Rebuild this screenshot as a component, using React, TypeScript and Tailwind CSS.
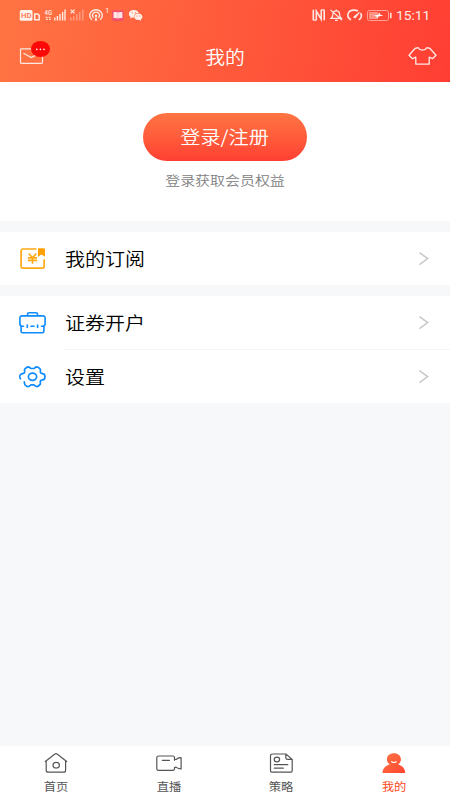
import { useState } from "react";

const FONT = "font-['Noto_Sans_CJK_SC','Noto_Sans',sans-serif]";

function SignalIcons() {
  return (
    <svg width="124" height="18" viewBox="19 6 124 18" fill="none" className="block">
      <rect x="19.800" y="10" width="12.700" height="10.800" rx="1.500" fill="#fff3ee" />
      <text x="21" y="18.200" fontSize="8" fontWeight="500" fontFamily="Roboto" fill="#ff6d42" textLength="10.400" lengthAdjust="spacingAndGlyphs">HD</text>
      <path d="M34.700 13.900h3l1.500 1.500v4.400h-4.500z" stroke="#ffece5" strokeWidth="1.500" />
      <text x="44.600" y="14.800" fontSize="7" fontWeight="500" fontFamily="Roboto" fill="#ffece5" textLength="7.600" lengthAdjust="spacingAndGlyphs">4G</text>
      <path d="M45.500 17.300h2M48.500 17.300h2M46 19.300h2M49 19.300h2" stroke="#ffd9cc" strokeWidth="1.200" />
      <path d="M54.800 20.500v-3M57.400 20.500v-4.500M60 20.500v-6.500M62.600 20.500v-8.500M65 20.500V9.500" stroke="#ffece5" strokeWidth="1.400" />
      <path d="M70.600 9.600l4 3.800M74.600 9.600l-4 3.800" stroke="#ffece5" strokeWidth="1.200" />
      <path d="M70.800 20.500v-3M73.800 20.500v-4M76.800 20.500v-6.500M79.800 20.500v-8.500M82.800 20.500V9.500" stroke="#ff9f83" strokeWidth="1.400" />
      <path d="M92 19.700a6.300 5.600 0 1 1 8 0M93.700 17.600a3.500 3 0 1 1 4.600 0" stroke="#ffece5" strokeWidth="1.400" />
      <circle cx="96" cy="15.800" r="1.200" fill="#ffece5" />
      <path d="M94.700 20.800l1.300-5 1.300 5z" fill="#ffece5" />
      <text x="105" y="12.800" fontSize="8" fontFamily="Roboto" fill="#ffece5">1</text>
      <rect x="112" y="10.300" width="11.800" height="10.700" rx="2" fill="#f4506a" />
      <path d="M113.500 12.300c1.800-.6 3.300-.4 4.400.3 1.200-.7 2.700-.9 4.500-.3v6c-1.800-.4-3.300-.2-4.500.3-1.100-.5-2.600-.7-4.400-.3z" fill="#ffe6e6" />
      <path d="M117.900 12.600v6" stroke="#f7a0aa" strokeWidth=".6" />
      <path d="M133.800 10c-2.800 0-4.900 1.600-4.900 3.900 0 1.300.7 2.400 1.800 3.100l-.4 1.600 2-1c.5.1 1 .2 1.500.2-.4-2.900 1.700-4.900 4.900-4.900-.5-1.700-2.400-2.900-4.900-2.900z" fill="#fff0ea" />
      <path d="M138.300 13.500c-2.300 0-4.100 1.500-4.100 3.300s1.800 3.300 4.100 3.300c.5 0 .9 0 1.300-.2l1.600.8-.4-1.300c1-.6 1.600-1.500 1.600-2.600 0-1.800-1.800-3.300-4.100-3.300z" fill="#fff0ea" />
      <g fill="#ff6a43">
        <circle cx="132.200" cy="12.800" r=".65" />
        <circle cx="135.500" cy="12.800" r=".65" />
        <circle cx="137" cy="16" r=".55" />
        <circle cx="139.800" cy="16" r=".55" />
      </g>
    </svg>
  );
}

function DeviceIcons() {
  return (
    <svg width="82" height="18" viewBox="311 6 82 18" fill="none" className="block">
      <path d="M313.300 9.800v10.400M324.200 9.800v10.400" stroke="#ffe9e4" strokeWidth="1.600" />
      <path d="M316.300 20.200V11l4.900 8.200V9.800" stroke="#ffe9e4" strokeWidth="1.500" />
      <path d="M313.300 20.200h3M321.200 9.800h3" stroke="#ffe9e4" strokeWidth="1.200" />
      <path d="M331.200 18.300h10c-1.200-1-1.600-2-1.600-4 0-2.300-1.400-3.500-3.400-3.500s-3.300 1.200-3.300 3.500c0 2-.3 3-1.700 4zM335 20.300h2.700M336.200 9.400v1.400M330.500 9.900l11.500 10.400" stroke="#ffe9e4" strokeWidth="1.200" />
      <path d="M351 19.900c-5.200-3-3.700-9.800 3-9.800 1.600 0 2.900.3 4 .9M360.400 13c1.700 2.400 1.300 5.200-1.600 6.900" stroke="#ffe9e4" strokeWidth="1.600" />
      <path d="M353.600 17l5.800-4.600-4.200 5.700z" fill="#ffe9e4" stroke="#ffe9e4" strokeWidth="1" />
      <rect x="367.500" y="10.500" width="21" height="10" rx="2" stroke="#ffa396" />
      <rect x="369" y="12" width="9" height="7" rx=".8" fill="#ff9384" />
      <path d="M373 15.700l5.300-1 .8-2.500 1.300 2.500 3 .7-5 1-1 2.300-1.200-2.500z" fill="#fff" />
      <path d="M390.800 12.800v5.400" stroke="#ffe0da" strokeWidth="1.600" />
    </svg>
  );
}

function MailIcon() {
  return (
    <svg width="32" height="26" viewBox="19 39 32 26" fill="none" className="block">
      <rect x="20.500" y="48.800" width="22" height="14.500" rx=".8" stroke="#ffe9e1" strokeWidth="1.200" />
      <path d="M23.500 53.300l7.800 4.300 7.500-4" stroke="#ffe9e1" strokeWidth="1.200" />
      <ellipse cx="40.500" cy="49" rx="9.500" ry="8" fill="#fd0808" />
      <g fill="#fff">
        <circle cx="36.800" cy="49.400" r=".8" />
        <circle cx="40.400" cy="49.400" r=".8" />
        <circle cx="44" cy="49.400" r=".8" />
      </g>
    </svg>
  );
}

function ShirtIcon() {
  return (
    <svg width="30" height="20" viewBox="408 46 30 20" fill="none" stroke="#ffe9e5" strokeWidth="1.300" strokeLinejoin="round" className="block">
      <path d="M418 47.700l-3 .8-6 6.700 3.500 3.500 3.300-1.500v7h13.400v-7l3.300 1.500 3.500-3.500-6-6.700-3-.8c-1 1.700-2.600 2.500-4.500 2.500s-3.500-.8-4.500-2.500z" />
    </svg>
  );
}

function SubscribeIcon() {
  return (
    <svg width="28" height="24" viewBox="19 247 28 24" fill="none" stroke="#ffa914" className="block">
      <path d="M36.500 249H23a1.900 1.900 0 0 0-1.900 1.900V266.300a1.900 1.900 0 0 0 1.900 1.900h19.300a1.900 1.900 0 0 0 1.900-1.900v-7" strokeWidth="1.700" />
      <path d="M38 248.200h5.800c.7 0 1.200.5 1.200 1.200v7.400l-3.600-2.300-3.400 2.300z" fill="#ffa105" stroke="none" />
      <path d="M28.700 253.500l3.800 4.300 3.800-4.300M27.900 257.900h9.200M27.900 260.400h9.200M32.500 257.500v6.300" strokeWidth="1.600" />
    </svg>
  );
}

function BriefcaseIcon() {
  return (
    <svg width="28" height="24" viewBox="19 311 28 24" fill="none" stroke="#0d8bff" strokeWidth="1.600" strokeLinecap="round" className="block">
      <path d="M21.300 326.200l-1.400-1.600v-6.800a1.900 1.900 0 0 1 1.900-1.900h21.400a1.900 1.900 0 0 1 1.900 1.900v6.800l-1.400 1.600" />
      <path d="M27.500 315.500v-1.200c0-1 .6-1.600 1.600-1.600h6.800c1 0 1.600.6 1.600 1.600v1.200" />
      <path d="M21.100 326.200v5c0 1 .6 1.600 1.600 1.600h19.600c1 0 1.600-.6 1.600-1.600v-5M21.300 326.200h2.200M27.300 325v2.400M31 326.200h3M37.600 325v2.400M41.500 326.200h2.200" />
    </svg>
  );
}

function GearIcon() {
  return (
    <svg width="28" height="24" viewBox="19 365 28 24" fill="none" stroke="#0d8bff" strokeWidth="1.700" strokeLinecap="round" strokeLinejoin="round" className="block">
      <path d="M20.500 378.800c-.9-1-.8-3.300.2-4.400.9-1.100 2.900-.5 3.700-1.700.8-1.100-.4-2.600.4-3.700.8-.9 2.600-2.200 3.700-2.200 1.200.1 1.500 1.700 2.700 1.700h2.600c1.200 0 1.500-1.600 2.700-1.700 1.200 0 3 1.300 3.700 2.200.8 1.100-.4 2.600.4 3.700.8 1.200 2.800.6 3.700 1.700.9 1.100.9 3.700 0 4.700-.9 1.100-2.900.5-3.700 1.600-.8 1.200.3 2.700-.5 3.700-.7.900-2.500 2.200-3.700 2.200-1.200-.1-1.500-1.700-2.700-1.700h-2.500c-1.200 0-1.500 1.600-2.700 1.700-1.100 0-3-1.200-3.700-2.200-.6-.9-.1-1.800-.5-2.600" />
      <ellipse cx="32.500" cy="376.800" rx="4.100" ry="3.600" />
    </svg>
  );
}

function ChevronIcon() {
  return (
    <svg width="12" height="16" viewBox="0 0 12 16" fill="none" stroke="#c9c9c9" strokeWidth="1.600" className="block">
      <path d="M1.500 1.600L9.600 7.600l-8.100 6" />
    </svg>
  );
}

function HomeIcon() {
  return (
    <svg width="26" height="22" viewBox="43 752 26 22" fill="none" stroke="#555" strokeWidth="1.200" strokeLinejoin="round" strokeLinecap="round" className="block">
      <path d="M45.300 761.500l9.300-7.300c.9-.6 1.900-.6 2.800 0l9.300 7.300M46.200 761v9.200c0 1.300.8 2 2 2h15.400c1.200 0 2-.7 2-2V761" />
      <ellipse cx="56.200" cy="765.200" rx="3.200" ry="2.800" />
    </svg>
  );
}

function LiveIcon() {
  return (
    <svg width="28" height="22" viewBox="155 752 28 22" fill="none" stroke="#555" strokeWidth="1.200" strokeLinejoin="round" strokeLinecap="round" className="block">
      <path d="M174.500 760.300v-2.600c0-1.200-.6-1.700-1.800-1.700h-14c-1.200 0-1.900.6-1.900 1.700v11c0 1.200.7 1.700 1.900 1.700h14c1.200 0 1.800-.5 1.800-1.700v-1.200M174.500 757.600v1.200c.7.900 1.600.9 2.300.2 1-.9 2.200-1.300 4.300-1.300v11.200c-2.100 0-3.300-.4-4.300-1.300-.7-.7-1.600-.7-2.300.2M162.300 760.300h7.200" />
    </svg>
  );
}

function StrategyIcon() {
  return (
    <svg width="26" height="22" viewBox="268 752 26 22" fill="none" stroke="#555" strokeWidth="1.200" strokeLinejoin="round" strokeLinecap="round" className="block">
      <path d="M285.800 754h-13.300c-1.200 0-2 .6-2 1.800v14.600c0 1.200.8 1.800 2 1.800h17.700c1.200 0 2-.6 2-1.800v-11zM285.800 754v3.700c0 1.200.6 1.700 1.800 1.700h4.600M274.300 764.700h13.500M274.300 768.200h9" />
      <ellipse cx="276.900" cy="759.500" rx="2.700" ry="2.300" />
    </svg>
  );
}

function MineIcon() {
  return (
    <svg width="26" height="22" viewBox="381 752 26 22" fill="none" className="block">
      <defs>
        <linearGradient id="mine" x1="0" y1="0" x2="1" y2="1">
          <stop stopColor="#ff7443" />
          <stop offset="1" stopColor="#ff4632" />
        </linearGradient>
      </defs>
      <path d="M393.900 753.300c4.100 0 7 2.600 7 6 0 2.200-1.100 4-2.800 5.100 4.200 1 7.200 4.200 7.200 8.600h-22.800c0-4.400 3-7.600 7.200-8.600-1.700-1.100-2.800-2.900-2.800-5.100 0-3.400 2.900-6 7-6z" fill="url(#mine)" />
      <path d="M391.700 761.700c1.200.9 3.200.9 4.400 0" stroke="#fff" strokeWidth="1.100" strokeLinecap="round" />
    </svg>
  );
}

const TABS = [
  { label: "首页", Icon: HomeIcon },
  { label: "直播", Icon: LiveIcon },
  { label: "策略", Icon: StrategyIcon },
  { label: "我的", Icon: MineIcon },
];

interface MenuRowProps {
  label: string;
  Icon: () => React.JSX.Element;
}

function MenuRow({ label, Icon }: MenuRowProps) {
  return (
    <button type="button" className="flex h-[53px] w-full items-center bg-white pr-5 pl-[19px] text-left">
      <Icon />
      <span className="mb-0.5 ml-[18px] inline-block origin-left scale-x-[1.11] text-[18px] leading-6 font-[350] text-black">{label}</span>
      <span className="ml-auto">
        <ChevronIcon />
      </span>
    </button>
  );
}

export default function App() {
  const [active, setActive] = useState("我的");

  return (
    <div className={`flex h-[800px] w-[450px] flex-col overflow-hidden bg-[#f7f8fa] ${FONT}`}>
      <header className="h-[82px] shrink-0 bg-[linear-gradient(100deg,#ff7443_0%,#ff5a3b_50%,#ff3e33_100%)]">
        <div className="flex h-[30px] items-center pl-[19px]">
          <SignalIcons />
          <div className="ml-[168px]">
            <DeviceIcons />
          </div>
          <span className="ml-[3px] inline-block origin-left scale-x-[1.02] font-[Roboto,sans-serif] text-[13.5px] leading-4 text-[#ffece8]">15:11</span>
        </div>
        <div className="grid h-[52px] grid-cols-[1fr_auto_1fr] items-center pr-3 pl-[19px]">
          <div className="-mt-2">
            <MailIcon />
          </div>
          <h1 className="mr-[7px] -ml-px scale-x-[1.1] pb-px text-[18px] leading-6 font-[350] text-white">我的</h1>
          <div className="justify-self-end">
            <ShirtIcon />
          </div>
        </div>
      </header>

      <section className="flex h-[139px] shrink-0 flex-col items-center bg-white pt-[31px]">
        <button
          type="button"
          className="flex h-[48px] w-[164px] items-center justify-center rounded-full bg-linear-to-b from-[#ff7443] to-[#ff3e33] text-[18px] font-[350] text-white"
        >
          <span className="inline-block scale-x-[1.12] pb-px">登录/注册</span>
        </button>
        <p className="mt-[9px] scale-x-[1.15] text-[13px] leading-5 font-[350] text-[#808080]">登录获取会员权益</p>
      </section>

      <section className="mt-[11px] shrink-0">
        <MenuRow label="我的订阅" Icon={SubscribeIcon} />
      </section>

      <section className="mt-[11px] shrink-0 bg-white">
        <MenuRow label="证券开户" Icon={BriefcaseIcon} />
        <div className="ml-[63px] h-px bg-[#f4f4f4]" />
        <MenuRow label="设置" Icon={GearIcon} />
      </section>

      <nav className="mt-auto grid h-[54px] shrink-0 grid-cols-4 bg-white">
        {TABS.map(({ label, Icon }) => (
          <button key={label} type="button" onClick={() => setActive(label)} className="flex flex-col items-center pt-[6px]">
            <Icon />
            <span
              className={`mt-1 inline-block scale-x-[1.12] text-[11px] leading-4 ${
                active === label ? "text-[#ff4a1c]" : "text-[#555]"
              }`}
            >
              {label}
            </span>
          </button>
        ))}
      </nav>
    </div>
  );
}
